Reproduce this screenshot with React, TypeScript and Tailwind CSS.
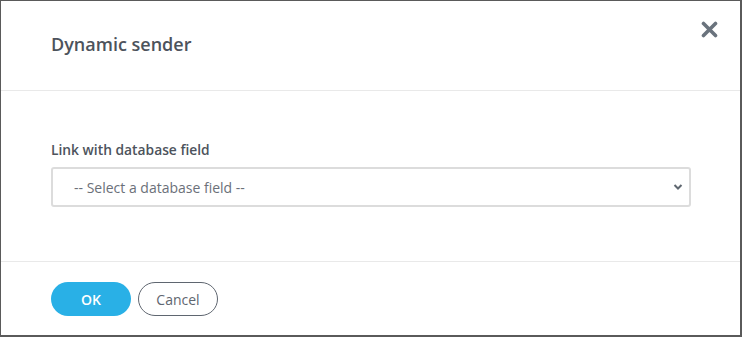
import React from "react";

export default function App() {
  return (
    <div
      className="w-[742px] h-[337px] flex flex-col bg-white border-t border-l border-r-2 border-b-2 border-[#5a5a5a] text-[#4a5059]"
      style={{ fontFamily: '"Open Sans", "Liberation Sans", sans-serif' }}
    >
      {/* Header */}
      <div className="h-[90px] shrink-0 flex justify-between border-b border-[#e9e9e9]">
        <h2 className="pl-[50px] pt-[30px] text-[18px] leading-[26px] font-semibold text-[#4d535c]">
          Dynamic sender
        </h2>
        <button className="mt-[20px] mr-[22px] w-[18px] h-[17px] flex items-center justify-center text-[#6a737d]" aria-label="Close">
          <svg width="17" height="17" viewBox="0 0 17 17" fill="none">
            <path d="M2.5 2.5 L14.5 14.5 M14.5 2.5 L2.5 14.5" stroke="currentColor" strokeWidth="3.6" strokeLinecap="round" />
          </svg>
        </button>
      </div>

      {/* Body */}
      <div className="h-[171px] shrink-0 border-b border-[#e9e9e9] pl-[50px] pt-[49px]">
        <label className="block text-[13.8px] leading-[19px] font-semibold text-[#4d535c]">
          Link with database field
        </label>
        <div className="relative mt-[8px] w-[640px] h-[40px]">
          <select className="appearance-none w-full h-full rounded-[3px] border-2 border-[#dcdcdc] bg-white pl-[21px] text-[14px] text-[#6b7079] outline-none">
            <option>-- Select a database field --</option>
          </select>
          <svg
            className="pointer-events-none absolute right-[8px] top-[16px] text-[#5f6770]"
            width="10"
            height="8"
            viewBox="0 0 10 8"
            fill="none"
          >
            <path d="M1.5 2 L5 5.5 L8.5 2" stroke="currentColor" strokeWidth="2" />
          </svg>
        </div>
      </div>

      {/* Footer */}
      <div className="flex-1 flex items-start gap-[7px] pl-[50px] pt-[20px]">
        <button className="w-[80px] h-[34px] rounded-full bg-[#29b0e6] text-white text-[14px] font-semibold">
          OK
        </button>
        <button className="w-[80px] h-[34px] rounded-full border border-[#5f6670] bg-white text-[#5f6670] text-[14px]">
          Cancel
        </button>
      </div>
    </div>
  );
}
